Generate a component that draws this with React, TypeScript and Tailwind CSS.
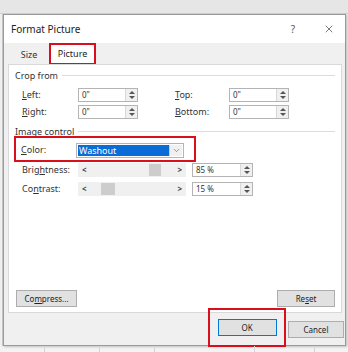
import { ChevronDown, X } from "lucide-react";

const FONT = { fontFamily: '"Noto Sans", "Open Sans", Arial, sans-serif' };

function Spinner() {
  return (
    <div className="w-[12px] h-full flex flex-col items-center justify-center bg-[#f0f0f0] border-l border-[#d8d8d8]">
      <span className="block w-0 h-0 border-l-[3px] border-r-[3px] border-b-[3px] border-l-transparent border-r-transparent border-b-[#555]" />
      <span className="block h-[2px]" />
      <span className="block w-0 h-0 border-l-[3px] border-r-[3px] border-t-[3px] border-l-transparent border-r-transparent border-t-[#555]" />
    </div>
  );
}

function SpinBox({ value, width }: { value: string; width: string }) {
  return (
    <div className={`flex h-[14px] border border-[#b4b4b4] bg-white ${width}`}>
      <div className="flex-1 pl-[3px] text-[8px] leading-[12px] text-[#333]">{value}</div>
      <Spinner />
    </div>
  );
}

function Label({ pre, u, post, w }: { pre: string; u: string; post: string; w: string }) {
  return (
    <span className={`text-[9px] text-[#333] ${w}`}>
      {pre}
      <span className="underline">{u}</span>
      {post}
    </span>
  );
}

function Slider({ thumb, width }: { thumb: number; width: number }) {
  return (
    <div className="relative flex items-center justify-between w-[108px] h-[14px] bg-[#f0f0f0] px-[4px] text-[8px] font-bold text-[#444]">
      <span>&lt;</span>
      <span>&gt;</span>
      <div className="absolute top-[1px] h-[12px] bg-[#cdcdcd]" style={{ left: thumb, width }} />
    </div>
  );
}

export default function App() {
  return (
    <div className="w-[348px] h-[352px] bg-[#ebebeb] overflow-hidden" style={FONT}>
      <div className="h-[14px] bg-[#e6e6e6] border-b border-[#cfcfcf]" />
      <div className="flex">
        <div className="w-[3px] border-r border-[#c8c8c8] bg-[#efefef]" />
        <div className="w-[343px] h-[332px] border border-[#9a9a9a] bg-[#f0f0f0] flex flex-col shadow-[1px_1px_2px_rgba(0,0,0,0.2)]">
          {/* title bar */}
          <div className="shrink-0 h-[28px] bg-white flex items-center pl-[7px] pr-[10px]">
            <span className="text-[10px] text-[#222] flex-1">Format Picture</span>
            <span className="text-[10px] text-[#555] mr-[28px]">?</span>
            <X size={12} strokeWidth={1.3} color="#333" />
          </div>
          {/* tabs */}
          <div className="shrink-0 h-[21px] flex items-end pl-[5px]">
            <div className="h-[18px] w-[40px] flex items-center justify-center text-[9px] text-[#333]">Size</div>
            <div className="h-[22px] w-[47px] border-2 border-[#d9101c] bg-white flex items-center justify-center text-[9px] text-[#222] -mb-[1px]">
              Picture
            </div>
          </div>
          {/* panel */}
          <div className="shrink-0 ml-[4px] mr-[3px] h-[249px] bg-white border border-[#d9d9d9] flex flex-col px-[6px]">
            <div className="flex items-center gap-[4px] mt-[4px]">
              <span className="text-[9px] text-[#333]">Crop from</span>
              <div className="flex-1 h-px bg-[#dcdcdc]" />
            </div>
            <div className="flex flex-col gap-[3px] mt-[5px] pl-[7px]">
              <div className="flex items-center">
                <Label pre="" u="L" post="eft:" w="w-[56px]" />
                <SpinBox value="0&quot;" width="w-[60px]" />
                <div className="w-[37px]" />
                <Label pre="" u="T" post="op:" w="w-[54px]" />
                <SpinBox value="0&quot;" width="w-[60px]" />
              </div>
              <div className="flex items-center">
                <Label pre="" u="R" post="ight:" w="w-[56px]" />
                <SpinBox value="0&quot;" width="w-[60px]" />
                <div className="w-[37px]" />
                <Label pre="" u="B" post="ottom:" w="w-[54px]" />
                <SpinBox value="0&quot;" width="w-[60px]" />
              </div>
            </div>
            <div className="flex items-center gap-[4px] mt-[6px]">
              <span className="text-[9px] text-[#333]">Image control</span>
              <div className="flex-1 h-px bg-[#dcdcdc]" />
            </div>
            {/* color row */}
            <div className="-ml-[1px] -mt-[2px] w-[182px] h-[26px] border-2 border-[#d9101c] flex items-center pl-[5px] pt-[2px]">
              <Label pre="" u="C" post="olor:" w="w-[55px]" />
              <div className="w-[108px] h-[15px] border border-[#b4b4b4] bg-white flex items-center p-[1px]">
                <div className="flex-1 h-full bg-[#0a6cd6] text-white text-[9px] leading-[11px] pl-[1px]">Washout</div>
                <div className="w-[13px] h-full flex items-center justify-center bg-[#f0f0f0] border-l border-[#cfcfcf]">
                  <ChevronDown size={9} strokeWidth={1.5} color="#555" />
                </div>
              </div>
            </div>
            <div className="flex flex-col gap-[5px] mt-[1px] pl-[7px]">
              <div className="flex items-center">
                <Label pre="Brig" u="h" post="tness:" w="w-[56px]" />
                <Slider thumb={71} width={12} />
                <div className="w-[6px]" />
                <SpinBox value="85 %" width="w-[61px]" />
              </div>
              <div className="flex items-center">
                <Label pre="Co" u="n" post="trast:" w="w-[56px]" />
                <Slider thumb={23} width={14} />
                <div className="w-[6px]" />
                <SpinBox value="15 %" width="w-[61px]" />
              </div>
            </div>
            <div className="flex-1" />
            <div className="flex justify-between mb-[5px] pl-[1px]">
              <div className="w-[61px] h-[17px] bg-[#e1e1e1] border border-[#adadad] flex items-center justify-center text-[8px] text-[#222]">
                Co<span className="underline">m</span>press...
              </div>
              <div className="w-[58px] h-[17px] bg-[#e1e1e1] border border-[#adadad] flex items-center justify-center text-[8px] text-[#222]">
                Re<span className="underline">s</span>et
              </div>
            </div>
          </div>
          {/* bottom buttons */}
          <div className="shrink-0 h-[32px] flex items-start justify-end pr-[1px]">
            <div className="shrink-0 w-[78px] h-[39px] -mt-[5px] border-2 border-[#d9101c] flex items-center justify-center">
              <div className="w-[59px] h-[17px] bg-[#e1e1e1] border border-[#0078d7] flex items-center justify-center text-[8px] text-[#222]">
                OK
              </div>
            </div>
            <div className="w-[56px] h-[17px] mt-[8px] ml-[2px] bg-[#e1e1e1] border border-[#adadad] flex items-center justify-center text-[8px] text-[#222]">
              Cancel
            </div>
          </div>
        </div>
      </div>
      <div className="flex h-[6px] bg-[#f3f3f3]">
        <div className="w-[45px] border-r border-[#d4d4d4]" />
        <div className="w-[55px] border-r border-[#d4d4d4]" />
        <div className="w-[55px] border-r border-[#d4d4d4]" />
        <div className="w-[100px] border-r border-[#d4d4d4]" />
        <div className="w-[60px] border-r border-[#d4d4d4]" />
      </div>
    </div>
  );
}
